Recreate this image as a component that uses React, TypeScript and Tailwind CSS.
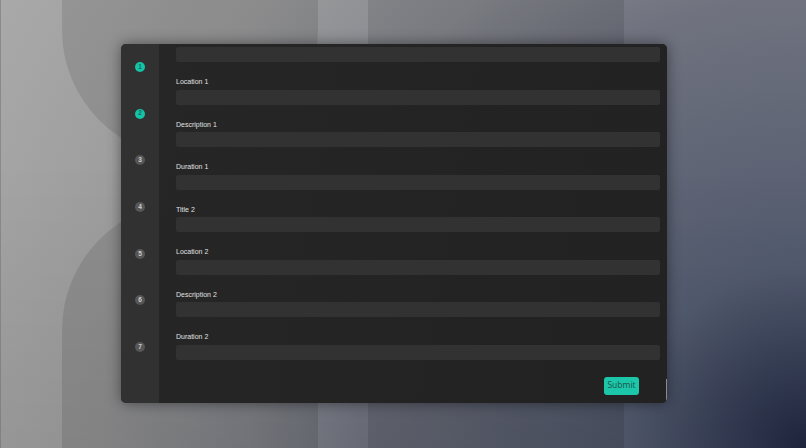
import React, { useEffect, useRef } from "react";

type Field = { label: string };

const fields: Field[] = [
  { label: "Title 1" },
  { label: "Location 1" },
  { label: "Description 1" },
  { label: "Duration 1" },
  { label: "Title 2" },
  { label: "Location 2" },
  { label: "Description 2" },
  { label: "Duration 2" },
];

const steps = [1, 2, 3, 4, 5, 6, 7];
const doneSteps = 2;

const Backdrop = () => (
  <div className="absolute inset-0 flex bg-[radial-gradient(circle_at_100%_100%,#1f2640_0px,#525a6e_180px,#70737f_450px,#888a90_560px,#9b9b9c_700px,#a9a9a9_922px)]">
    <div className="w-[62px] border-l border-[#8a8a8a]" />
    <div className="flex w-[256px] flex-col">
      <div className="h-[158px] rounded-b-[128px] bg-black/[0.1]" />
      <div className="h-[44px]" />
      <div className="flex-1 rounded-t-[128px] bg-black/[0.1]" />
    </div>
    <div className="w-[50px]" />
    <div className="w-[256px] bg-black/[0.1]" />
    <div className="flex-1" />
    <div className="pointer-events-none absolute inset-0 bg-[linear-gradient(to_bottom,transparent_35%,rgba(0,0,0,0.07))]" />
  </div>
);

const Stepper = () => (
  <aside className="flex w-[38px] flex-col items-center gap-[36.7px] bg-[#313131] pt-[18px]">
    {steps.map((n) => (
      <div
        key={n}
        className={`flex h-[10px] w-[10px] items-center justify-center rounded-full text-[6.5px] leading-none font-semibold ${
          n <= doneSteps ? "bg-[#16c3a7] text-[#146a5e]" : "bg-[#565656] text-[#cfcfcf]"
        }`}
      >
        {n}
      </div>
    ))}
  </aside>
);

export default function App() {
  const scroller = useRef<HTMLDivElement>(null);

  useEffect(() => {
    if (scroller.current) scroller.current.scrollTop = 10;
  }, []);

  return (
    <div className="relative h-[448px] w-[806px] overflow-hidden font-['Liberation_Sans',Arial,sans-serif]">
      <Backdrop />

      <div className="relative ml-[121px] pt-[44px]">
        <div className="flex h-[359px] w-[546px] overflow-hidden rounded-[5px] bg-[#242424] shadow-[0_0_14px_rgba(0,0,0,0.45)]">
          <Stepper />

          <div className="relative flex-1 bg-[linear-gradient(100deg,#262626_0%,#232323_60%,#222222_100%)]">
            <div
              ref={scroller}
              className="h-full overflow-y-auto pt-[0.5px] [scrollbar-width:none]"
            >
              <div className="flex flex-col gap-[15px] pl-[17px] pr-[7px]">
                {fields.map((f) => (
                  <div key={f.label} className="flex flex-col">
                    <label className="mb-[3.5px] text-[7px] leading-[9px] text-[#e0e0e0]">
                      {f.label}
                    </label>
                    <div className="h-[15px] rounded-[2px] bg-[#323232]" />
                  </div>
                ))}
              </div>

              <div className="mt-[17px] mb-[8px] flex justify-end pr-[28px]">
                <button className="h-[18px] w-[35px] rounded-[3px] bg-[#1bc6a9] font-['Open_Sans',sans-serif] text-[8.5px] leading-none text-[#1b544c]">
                  Submit
                </button>
              </div>
            </div>

            {/* scrollbar thumb */}
            <div className="absolute right-0 bottom-[2px] h-[22px] w-[1.5px] bg-[#8a8a8a]" />
          </div>
        </div>
      </div>
    </div>
  );
}
